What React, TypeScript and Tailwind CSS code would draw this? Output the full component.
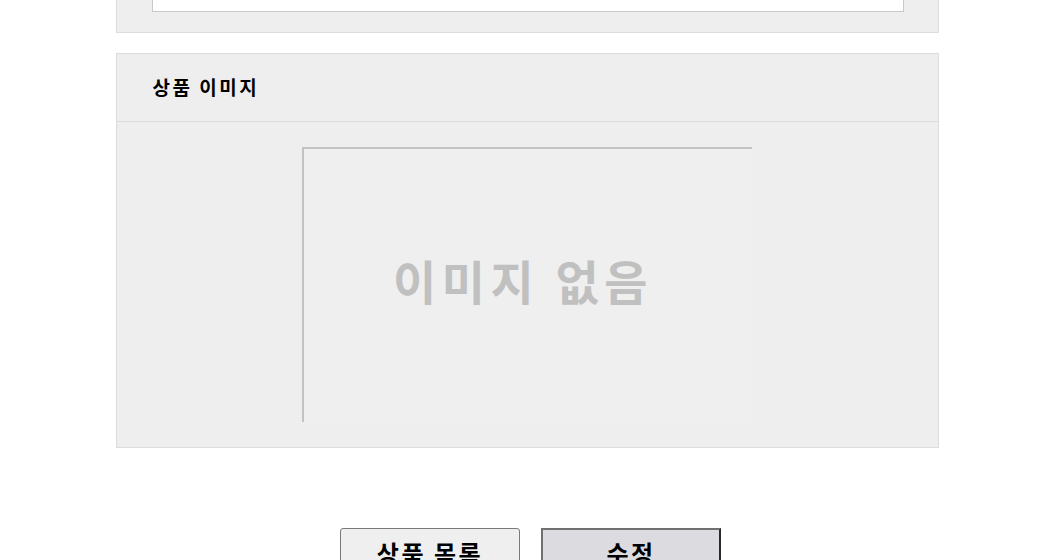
export default function App() {
  const font = { fontFamily: '"Noto Sans CJK KR", "Noto Sans", sans-serif' };
  return (
    <div className="w-[1054px] h-[560px] overflow-hidden bg-white" style={font}>
      <div className="w-[823px] mx-auto flex flex-col gap-[20px]">
        <div className="border border-t-0 border-[#dcdcdc] bg-[#eeeeee] pl-[35px] pr-[34px] pb-[20px]">
          <div className="h-[12px] bg-white border border-t-0 border-[#c8c8c8]" />
        </div>
        <div className="border border-[#dcdcdc] bg-[#eeeeee]">
          <div className="h-[68px] flex items-center pl-[36px] border-b border-[#dcdcdc]">
            <span className="text-[19px] font-bold text-black tracking-[2.5px]">상품 이미지</span>
          </div>
          <div className="pt-[25px] pb-[25px] flex justify-center">
            <div className="w-[450px] h-[275px] border-t-2 border-l-2 border-[#c3c3c3] bg-[#efefef] flex items-center justify-center">
              <span className="text-[47px] font-bold text-[#c0c0c0] tracking-[5.5px] -mt-[10px] mr-[10px]">이미지 없음</span>
            </div>
          </div>
        </div>
      </div>
      <div className="flex justify-center gap-[21px] mt-[80px] pl-[7px]">
        <button className="w-[180px] h-[50px] bg-[#efefef] border border-[#7a7a7a] rounded-[3px] text-[24px] font-bold text-black flex justify-center pt-[6px] tracking-[2.5px]">
          상품 목록
        </button>
        <button className="w-[180px] h-[50px] bg-[#dcdce0] border-2 border-t-[#707070] border-l-[#707070] border-r-[#2a2a2a] border-b-[#2a2a2a] text-[24px] font-bold text-black flex justify-center pt-[5px] tracking-[2.5px]">
          수정
        </button>
      </div>
    </div>
  );
}
